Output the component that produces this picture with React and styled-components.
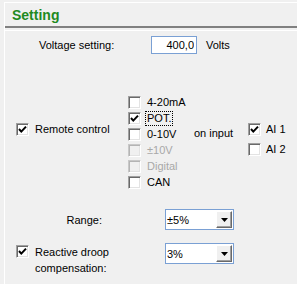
import React from 'react';
import styled, { createGlobalStyle } from 'styled-components';

const Global = createGlobalStyle`
  html, body { margin: 0; padding: 0; background: #f0f0f0; }
  body {
    font-family: "Liberation Sans", Arial, sans-serif;
    font-size: 11px;
    color: #000;
  }
`;

const Frame = styled.div`
  width: 292px;
  height: 281px;
  margin: 2px 0 0 4px;
  border-top: 1px solid #fff;
  border-left: 1px solid #fff;
  display: flex;
  flex-direction: column;
`;

const Header = styled.div`
  height: 19px;
  padding: 4px 0 0 7px;
  border-bottom: 2px solid #808080;
  box-shadow: 0 2px 0 #f0f0f0, 0 3px 0 #fff;
  font-size: 14px;
  line-height: 16px;
  font-weight: bold;
  color: #1f8a1f;
`;

const VoltageRow = styled.div`
  display: flex;
  align-items: center;
  height: 18px;
  margin-top: 8px;
`;

const FieldLabel = styled.span`
  width: ${p => p.$width}px;
  margin-left: ${p => p.$indent || 0}px;
  text-align: ${p => p.$align || 'left'};
  flex: none;
`;

const NumberInput = styled.input`
  width: 46px;
  height: 18px;
  box-sizing: border-box;
  border: 1px solid #7aa0d4;
  background: #fff;
  padding: 0 2px;
  font-family: inherit;
  font-size: 11px;
  text-align: right;
  color: #000;
  outline: none;
`;

const Unit = styled.span`
  margin-left: 9px;
`;

const RemoteSection = styled.div`
  display: flex;
  margin-top: 40px;
`;

const LeftCol = styled.div`
  width: 123px;
  box-sizing: border-box;
  padding: 28px 0 0 11px;
`;

const OptionsCol = styled.div`
  width: 66px;
  display: flex;
  flex-direction: column;
`;

const OnInput = styled.div`
  width: 54px;
  padding-top: 33px;
  line-height: 13px;
`;

const AICol = styled.div`
  display: flex;
  flex-direction: column;
  gap: 5px;
  padding-top: 28px;
`;

const CheckItem = styled.label`
  display: flex;
  align-items: ${p => (p.$top ? 'flex-start' : 'center')};
  gap: ${p => p.$gap ?? 4}px;
  height: ${p => (p.$h ? `${p.$h}px` : 'auto')};
`;

const Box = styled.span`
  flex: none;
  width: 13px;
  height: 13px;
  box-sizing: border-box;
  margin-top: ${p => p.$mt || 0}px;
  border: 1px solid;
  border-color: ${p => (p.$disabled ? '#c8c8c8 #fff #fff #c8c8c8' : '#a0a0a0 #fff #fff #a0a0a0')};
  box-shadow: ${p =>
    p.$disabled
      ? 'inset 1px 1px 0 #b4b4b4, inset -1px -1px 0 #e3e3e3'
      : 'inset 1px 1px 0 #696969, inset -1px -1px 0 #e3e3e3'};
  background: ${p => (p.$disabled ? '#f0f0f0' : '#fff')};
  display: flex;
  align-items: center;
  justify-content: center;
`;

const Text = styled.span`
  border: 1px dotted ${p => (p.$focus ? '#000' : 'transparent')};
  padding: 0 1px;
  line-height: ${p => p.$lh || 13}px;
  margin-top: ${p => p.$mt || 0}px;
  color: ${p => (p.$disabled ? '#a8a8a8' : '#000')};
  white-space: nowrap;
`;

const Check = () => (
  <svg width="9" height="9" viewBox="0 0 9 9">
    <path d="M1 4 L3.3 6.6 L8 1.6" fill="none" stroke="#000" strokeWidth="2" />
  </svg>
);

const Checkbox = ({ checked, disabled, mt }) => (
  <Box $disabled={disabled} $mt={mt}>{checked && <Check />}</Box>
);

const RangeRow = styled.div`
  display: flex;
  align-items: center;
  height: 21px;
  margin-top: 19px;
`;

const DroopRow = styled.div`
  display: flex;
  align-items: flex-start;
  margin-top: 13px;
`;

const DroopLeft = styled.div`
  width: 160px;
  box-sizing: border-box;
  padding-left: 11px;
`;

const Select = styled.div`
  width: 69px;
  height: 21px;
  box-sizing: border-box;
  margin-left: ${p => p.$ml || 0}px;
  border: 1px solid #7aa0d4;
  background: #fff;
  display: flex;
  align-items: center;
  flex: none;
`;

const SelectValue = styled.span`
  flex: 1;
  padding-left: 1px;
`;

const SelectButton = styled.span`
  width: 16px;
  height: 17px;
  margin-right: 1px;
  box-sizing: border-box;
  background: #f0f0f0;
  border: 1px solid;
  border-color: #fff #696969 #696969 #fff;
  box-shadow: inset -1px -1px 0 #a0a0a0;
  display: flex;
  align-items: center;
  justify-content: center;
`;

const Arrow = () => (
  <svg width="7" height="4" viewBox="0 0 7 4">
    <polygon points="0,0 7,0 3.5,4" fill="#000" />
  </svg>
);

const Dropdown = ({ value, ml }) => (
  <Select $ml={ml}>
    <SelectValue>{value}</SelectValue>
    <SelectButton><Arrow /></SelectButton>
  </Select>
);

const options = [
  { label: '4-20mA' },
  { label: 'POT.', checked: true, focus: true },
  { label: '0-10V' },
  { label: '±10V', disabled: true },
  { label: 'Digital', disabled: true },
  { label: 'CAN' },
];

export default function App() {
  return (
    <>
      <Global />
      <Frame>
        <Header>Setting</Header>

        <VoltageRow>
          <FieldLabel $indent={34} $width={112}>Voltage setting:</FieldLabel>
          <NumberInput readOnly value="400,0" />
          <Unit>Volts</Unit>
        </VoltageRow>

        <RemoteSection>
          <LeftCol>
            <CheckItem>
              <Checkbox checked />
              <Text>Remote control</Text>
            </CheckItem>
          </LeftCol>
          <OptionsCol>
            {options.map(o => (
              <CheckItem key={o.label} $h={16}>
                <Checkbox checked={o.checked} disabled={o.disabled} />
                <Text $focus={o.focus} $disabled={o.disabled}>{o.label}</Text>
              </CheckItem>
            ))}
          </OptionsCol>
          <OnInput>on input</OnInput>
          <AICol>
            <CheckItem $gap={3}>
              <Checkbox checked />
              <Text>AI 1</Text>
            </CheckItem>
            <CheckItem $gap={3}>
              <Checkbox />
              <Text>AI 2</Text>
            </CheckItem>
          </AICol>
        </RemoteSection>

        <RangeRow>
          <FieldLabel $width={97} $align="right">Range:</FieldLabel>
          <Dropdown value="±5%" ml={63} />
        </RangeRow>

        <DroopRow>
          <DroopLeft>
            <CheckItem $top>
              <Checkbox checked mt={2} />
              <Text $lh={16}>Reactive droop<br />compensation:</Text>
            </CheckItem>
          </DroopLeft>
          <Dropdown value="3%" />
        </DroopRow>
      </Frame>
    </>
  );
}
